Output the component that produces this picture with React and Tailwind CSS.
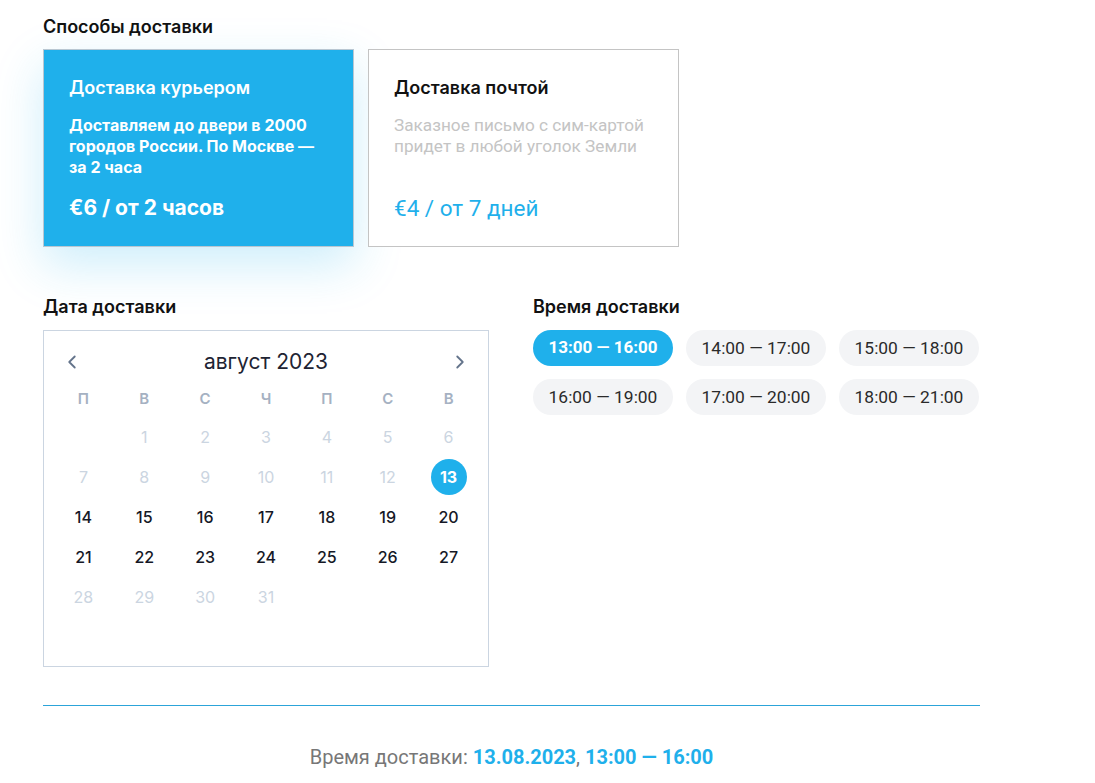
import { ChevronLeft, ChevronRight } from "lucide-react";

const head = { fontFamily: "Inter, 'Noto Sans', sans-serif" };
const body = { fontFamily: "Roboto, 'Liberation Sans', sans-serif" };

const weekDays = ["П", "В", "С", "Ч", "П", "С", "В"];
const slots = [
  "13:00 — 16:00",
  "14:00 — 17:00",
  "15:00 — 18:00",
  "16:00 — 19:00",
  "17:00 — 20:00",
  "18:00 — 21:00",
];

// август 2023 начинается со вторника
const days = [null, ...Array.from({ length: 31 }, (_, i) => i + 1)];

function Calendar() {
  return (
    <div className="border border-[#cbd5e1] h-[337px] px-[9px] pt-[18px]">
      <div className="flex items-center justify-between px-[8px] h-[26px]">
        <ChevronLeft size={22} strokeWidth={2} className="text-[#64748b]" />
        <span className="text-[21px] text-[#1e2433]" style={head}>
          август 2023
        </span>
        <ChevronRight size={22} strokeWidth={2} className="text-[#64748b]" />
      </div>
      <div className="grid grid-cols-7 mt-[6px]" style={head}>
        {weekDays.map((d, i) => (
          <div
            key={i}
            className="h-[36px] flex items-center justify-center text-[15px] font-semibold text-[#a5b1c2]"
          >
            {d}
          </div>
        ))}
        {days.map((d, i) => {
          const selected = d === 13;
          const past = d !== null && (d < 13 || d > 27);
          return (
            <div key={i} className="h-[40px] flex items-center justify-center">
              {d !== null && (
                <span
                  className={
                    selected
                      ? "w-[36px] h-[36px] rounded-full bg-[#1fb0eb] text-white font-bold flex items-center justify-center text-[16px]"
                      : past
                      ? "text-[16px] text-[#cbd5e1]"
                      : "text-[16px] text-[#151826] font-medium"
                  }
                >
                  {d}
                </span>
              )}
            </div>
          );
        })}
      </div>
    </div>
  );
}

export default function App() {
  return (
    <div className="min-h-screen bg-white pl-[43px] pt-[16px]">
      <div className="w-[937px]">
        <h2 className="text-[18px] font-semibold text-[#111] leading-[22px]" style={head}>
          Способы доставки
        </h2>
        <div className="flex gap-[14px] mt-[11px]">
          <div
            className="w-[311px] h-[198px] bg-[#1fb0eb] border border-[#b9c7d2] px-[25px] pt-[27px] text-white shadow-[0_18px_45px_rgba(31,176,235,0.22)]"
            style={head}
          >
            <div className="text-[18px] font-semibold leading-[22px]">Доставка курьером</div>
            <p className="mt-[16px] text-[16px] font-bold leading-[21px]">
              Доставляем до двери в 2000 городов России. По Москве — за 2 часа
            </p>
            <div className="mt-[17px] text-[21px] font-bold leading-[26px]">€6 / от 2 часов</div>
          </div>
          <div className="w-[311px] h-[198px] bg-white border border-[#c4c4c4] px-[25px] pt-[27px]">
            <div className="text-[18px] font-semibold leading-[22px] text-[#111]" style={head}>
              Доставка почтой
            </div>
            <p className="mt-[16px] text-[17.2px] leading-[21px] text-[#c4c4c4]" style={body}>
              Заказное письмо с сим-картой придет в любой уголок Земли
            </p>
            <div className="mt-[38px] text-[22.5px] leading-[26px] text-[#1fb0eb]" style={body}>
              €4 / от 7 дней
            </div>
          </div>
        </div>

        <div className="flex gap-[44px] mt-[49px]">
          <div className="w-[446px]">
            <h2 className="text-[18px] font-semibold text-[#111] leading-[22px] mb-[12px]" style={head}>
              Дата доставки
            </h2>
            <Calendar />
          </div>
          <div className="flex-1">
            <h2 className="text-[18px] font-semibold text-[#111] leading-[22px] mb-[12px]" style={head}>
              Время доставки
            </h2>
            <div className="grid grid-cols-[140px_140px_140px] gap-[13px]" style={body}>
              {slots.map((s, i) => (
                <button
                  key={s}
                  className={
                    i === 0
                      ? "h-[36px] rounded-full bg-[#1fb0eb] text-white font-bold text-[17px]"
                      : "h-[36px] rounded-full bg-[#f3f4f6] text-[#2a2a2a] text-[17.4px]"
                  }
                >
                  {s}
                </button>
              ))}
            </div>
          </div>
        </div>

        <div className="mt-[38px] h-px bg-[#2ca4d9]" />
        <p className="mt-[36px] text-center text-[20px] text-[#777]" style={body}>
          Время доставки: <span className="font-bold text-[#1fb0eb]">13.08.2023</span>,{" "}
          <span className="font-bold text-[#1fb0eb]">13:00 — 16:00</span>
        </p>
      </div>
    </div>
  );
}
